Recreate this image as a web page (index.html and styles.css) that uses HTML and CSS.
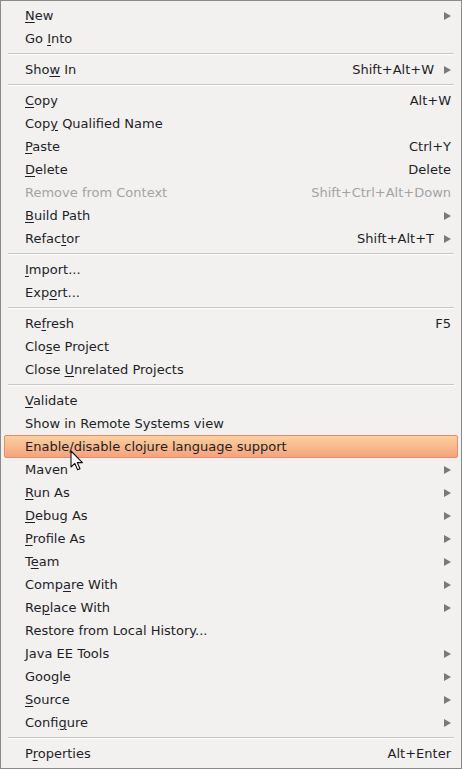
FILE: index.html
```html
<!DOCTYPE html>
<html>
<head>
<meta charset="utf-8">
<link rel="stylesheet" href="styles.css">
</head>
<body>
<div class="menu">
  <div class="item"><span class="label"><u>N</u>ew</span><span class="arrow"></span></div>
  <div class="item"><span class="label">Go <u>I</u>nto</span></div>
  <div class="sep"></div>
  <div class="item"><span class="label">Sho<u>w</u> In</span><span class="key">Shift+Alt+W</span><span class="arrow"></span></div>
  <div class="sep"></div>
  <div class="item"><span class="label"><u>C</u>opy</span><span class="key">Alt+W</span></div>
  <div class="item"><span class="label">Cop<u>y</u> Qualified Name</span></div>
  <div class="item"><span class="label"><u>P</u>aste</span><span class="key">Ctrl+Y</span></div>
  <div class="item"><span class="label"><u>D</u>elete</span><span class="key">Delete</span></div>
  <div class="item disabled"><span class="label">Remove from Context</span><span class="key">Shift+Ctrl+Alt+Down</span></div>
  <div class="item"><span class="label"><u>B</u>uild Path</span><span class="arrow"></span></div>
  <div class="item"><span class="label">Refac<u>t</u>or</span><span class="key">Shift+Alt+T</span><span class="arrow"></span></div>
  <div class="sep"></div>
  <div class="item"><span class="label"><u>I</u>mport...</span></div>
  <div class="item"><span class="label">Exp<u>o</u>rt...</span></div>
  <div class="sep"></div>
  <div class="item"><span class="label">Re<u>f</u>resh</span><span class="key">F5</span></div>
  <div class="item"><span class="label">Clo<u>s</u>e Project</span></div>
  <div class="item"><span class="label">Close <u>U</u>nrelated Projects</span></div>
  <div class="sep"></div>
  <div class="item"><span class="label"><u>V</u>alidate</span></div>
  <div class="item"><span class="label">Show in Remote Systems view</span></div>
  <div class="item active"><span class="label">Enable/disable clojure language support</span>
    <svg class="cursor" width="14" height="22" viewBox="0 0 14 22"><path d="M1 1 L1 17 L4.8 13.4 L7.6 19.8 L10 18.8 L7.3 12.6 L12.4 12.6 Z" fill="#fff" stroke="#111" stroke-width="1.1" stroke-linejoin="round"/></svg>
  </div>
  <div class="item"><span class="label">Maven</span><span class="arrow"></span></div>
  <div class="item"><span class="label"><u>R</u>un As</span><span class="arrow"></span></div>
  <div class="item"><span class="label"><u>D</u>ebug As</span><span class="arrow"></span></div>
  <div class="item"><span class="label"><u>P</u>rofile As</span><span class="arrow"></span></div>
  <div class="item"><span class="label">T<u>e</u>am</span><span class="arrow"></span></div>
  <div class="item"><span class="label">Comp<u>a</u>re With</span><span class="arrow"></span></div>
  <div class="item"><span class="label">Re<u>p</u>lace With</span><span class="arrow"></span></div>
  <div class="item"><span class="label">Restore from Local History...</span></div>
  <div class="item"><span class="label">Java EE Tools</span><span class="arrow"></span></div>
  <div class="item"><span class="label">Google</span><span class="arrow"></span></div>
  <div class="item"><span class="label"><u>S</u>ource</span><span class="arrow"></span></div>
  <div class="item"><span class="label">Confi<u>g</u>ure</span><span class="arrow"></span></div>
  <div class="sep"></div>
  <div class="item"><span class="label">P<u>r</u>operties</span><span class="key">Alt+Enter</span></div>
</div>
</body>
</html>
```

FILE: styles.css
```css
html, body {
  margin: 0;
  padding: 0;
  background: #f2f1f0;
}
.menu {
  box-sizing: border-box;
  width: 462px;
  height: 769px;
  border: 1px solid #8a8a8a;
  background: #f2f1f0;
  padding: 3px 3px;
  font-family: "DejaVu Sans", sans-serif;
  font-size: 13px;
  color: #1e1e28;
}
.item {
  position: relative;
  box-sizing: border-box;
  height: 23px;
  display: flex;
  align-items: center;
  padding: 0 7px 0 21px;
  white-space: nowrap;
}
.item u {
  text-decoration: underline;
  text-underline-offset: 2px;
}
.label {
  flex: 0 0 auto;
}
.key {
  margin-left: auto;
}
.arrow {
  flex: 0 0 auto;
  width: 0;
  height: 0;
  border-top: 4px solid transparent;
  border-bottom: 4px solid transparent;
  border-left: 7px solid #7a7a7a;
  margin-left: auto;
}
.key + .arrow {
  margin-left: 10px;
}
.disabled {
  color: #a3a3a3;
}
.sep {
  height: 8px;
  box-sizing: border-box;
  margin: 0 4px;
  background: linear-gradient(to bottom, transparent 3px, #c8c7c6 3px, #c8c7c6 4px, #ffffff 4px, #ffffff 5px, transparent 5px);
}
.active {
  background: linear-gradient(to bottom, #fbd09e, #f4a37d);
  border: 1px solid #e58d6c;
  border-radius: 2px;
  padding-left: 20px;
  margin: 0 0 0 0;
}
.cursor {
  position: absolute;
  left: 65px;
  top: 14px;
}
```
